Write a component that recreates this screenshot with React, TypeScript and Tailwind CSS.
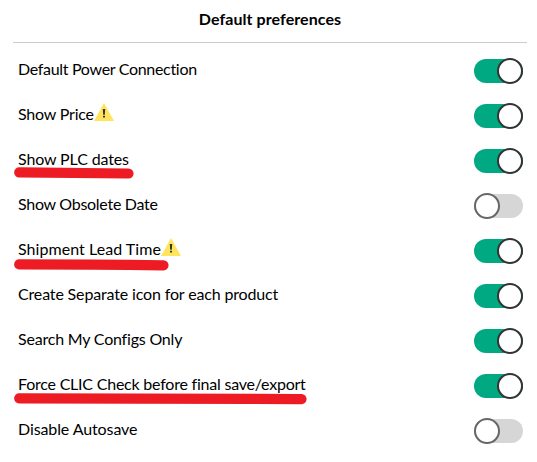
import clsx from 'clsx';

interface Preference {
  label: string;
  enabled: boolean;
  tracking: string;
  warning?: boolean;
  mark?: { width: number; path: string };
}

/* Red marker strokes start just left of the label they underline */
const PREFERENCES: Preference[] = [
  { label: 'Default Power Connection', enabled: true, tracking: 'tracking-[-0.31px]' },
  { label: 'Show Price', enabled: true, tracking: 'tracking-[-0.2px]', warning: true },
  {
    label: 'Show PLC dates',
    enabled: true,
    tracking: 'tracking-[-0.13px]',
    mark: { width: 120, path: 'M5.2 5.4 Q60 6 114.5 6.5' },
  },
  { label: 'Show Obsolete Date', enabled: false, tracking: 'tracking-[-0.28px]' },
  {
    label: 'Shipment Lead Time',
    enabled: true,
    tracking: 'tracking-[0.05px]',
    warning: true,
    mark: { width: 156, path: 'M5.2 7.4 Q80 7.5 149.5 8.3' },
  },
  { label: 'Create Separate icon for each product', enabled: true, tracking: 'tracking-[-0.15px]' },
  { label: 'Search My Configs Only', enabled: true, tracking: 'tracking-[-0.2px]' },
  {
    label: 'Force CLIC Check before final save/export',
    enabled: true,
    tracking: 'tracking-[-0.22px]',
    mark: { width: 294, path: 'M5.2 6.3 L287.5 7.1' },
  },
  { label: 'Disable Autosave', enabled: false, tracking: 'tracking-[-0.1px]' },
];

function WarningIcon() {
  return (
    <svg className="-mt-[8px] shrink-0" width="20" height="18" viewBox="0 0 20 18">
      <path d="M10 0 L20 18 H0 Z" fill="#ffe45c" />
      <path d="M8.8 6 H11.2 L10.8 11.8 H9.2 Z M9 12.8 H11 V14.6 H9 Z" fill="#333333" />
    </svg>
  );
}

function Toggle({ enabled }: { enabled: boolean }) {
  return (
    <div
      role="switch"
      aria-checked={enabled}
      className={clsx('flex h-[24px] w-[49px] items-center rounded-full', enabled ? 'justify-end bg-[#01a982]' : 'bg-[#d6d6d6]')}
    >
      <span
        className={clsx('size-[26px] shrink-0 rounded-full border-2 bg-white', enabled ? 'border-[#333333]' : 'border-[#666666]')}
      />
    </div>
  );
}

function PreferenceRow({ label, enabled, tracking, warning, mark }: Preference) {
  return (
    <li className="relative flex h-[26px] items-center justify-between pr-1 pl-[5px]">
      <div className="flex items-center">
        <span className={clsx('-mt-[4px] whitespace-nowrap', tracking)}>{label}</span>
        {warning && <WarningIcon />}
      </div>
      <Toggle enabled={enabled} />
      {mark && (
        <svg className="absolute top-[19px] left-[1px]" width={mark.width} height="14">
          <path d={mark.path} fill="none" stroke="#ed1c24" strokeWidth="10.2" strokeLinecap="round" />
        </svg>
      )}
    </li>
  );
}

export default function App() {
  return (
    <main className="h-[462px] w-[537px] overflow-hidden bg-white pr-[10px] pl-[13px] font-[Lato,sans-serif] text-[16px] leading-[24px] text-black">
      <h1 className="h-[43px] border-b border-[#cccccc] pt-[7px] text-center font-bold">
        <span className="tracking-[0.08px]">Default preferences</span>
      </h1>
      <ul className="flex flex-col gap-[19px] pt-[15px]">
        {PREFERENCES.map((item) => (
          <PreferenceRow key={item.label} {...item} />
        ))}
      </ul>
    </main>
  );
}
